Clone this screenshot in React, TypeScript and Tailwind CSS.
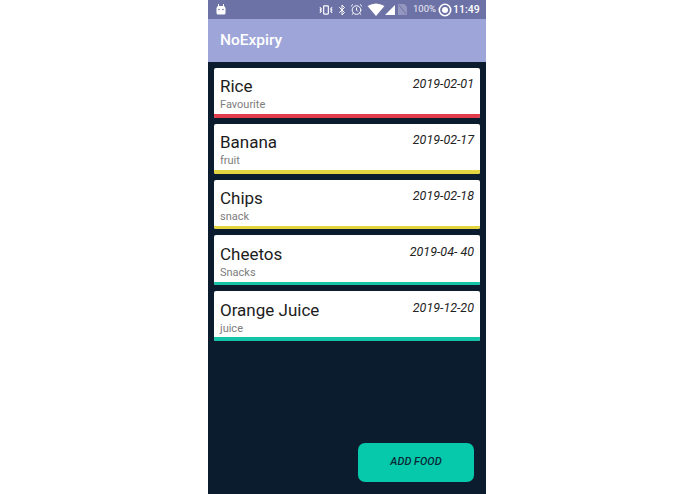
import { Bluetooth, AlarmClock, Vibrate } from 'lucide-react';

const foods = [
  { name: 'Rice', tag: 'Favourite', date: '2019-02-01', bar: 'bg-[#e23b4a]' },
  { name: 'Banana', tag: 'fruit', date: '2019-02-17', bar: 'bg-[#e3d53f]' },
  { name: 'Chips', tag: 'snack', date: '2019-02-18', bar: 'bg-[#e3d53f]' },
  { name: 'Cheetos', tag: 'Snacks', date: '2019-04- 40', bar: 'bg-[#14c4a8]' },
  { name: 'Orange Juice', tag: 'juice', date: '2019-12-20', bar: 'bg-[#14c4a8]' },
];

function StatusBar() {
  return (
    <div className="h-[19px] shrink-0 bg-[#6d72a6] flex items-center pl-[7px] pr-[6px] text-white">
      {/* android robot */}
      <svg width="12" height="12" viewBox="0 0 12 12" fill="#fff">
        <path d="M1.5 4.5 Q1.5 2 3.5 2 L8.5 2 Q10.5 2 10.5 4.5 L10.5 9 Q10.5 10.5 9 10.5 L3 10.5 Q1.5 10.5 1.5 9 Z" />
        <rect x="3" y="0" width="1" height="2.5" />
        <rect x="8" y="0" width="1" height="2.5" />
        <circle cx="4" cy="5.5" r="0.8" fill="#6d72a6" />
        <circle cx="8" cy="5.5" r="0.8" fill="#6d72a6" />
      </svg>
      <div className="ml-auto flex items-center">
        <Vibrate size={14} strokeWidth={2} className="mr-[3px]" />
        <Bluetooth size={12} strokeWidth={2} className="mr-[2px]" />
        <AlarmClock size={13} strokeWidth={1.8} className="mr-[4px]" />
        <svg width="18" height="13" viewBox="0 0 17 13" fill="#fff">
          <path d="M0 3 Q8.5 -2 17 3 L8.5 13 Z" />
        </svg>
        <svg width="10" height="10" viewBox="0 0 10 10" fill="#fff" className="mr-[3px]">
          <path d="M10 0 V10 H0 Z" />
        </svg>
        <svg width="9" height="11" viewBox="0 0 10 12" className="mr-[6px]">
          <path d="M0 0 H7 L10 3 V12 H0 Z" fill="#9397bf" />
          <path d="M1 1 L9 11" stroke="#6d72a6" strokeWidth="1" />
        </svg>
        <span className="w-[22px] text-[9.5px] text-[#e9eaf3] mr-[3px]">100%</span>
        <svg width="14" height="14" viewBox="0 0 14 14" className="mr-[1px]">
          <circle cx="7" cy="7" r="5.7" fill="none" stroke="#fff" strokeWidth="1.6" />
          <circle cx="7" cy="7" r="3" fill="#fff" />
        </svg>
        <span className="w-[27px] text-[10.5px] font-medium">11:49</span>
      </div>
    </div>
  );
}

function FoodCard({ name, tag, date, bar }: { name: string; tag: string; date: string; bar: string }) {
  return (
    <div className="h-[49.8px] bg-white rounded-[2px] overflow-hidden flex flex-col">
      <div className="flex-1 flex justify-between pl-[6px] pr-[6px] min-h-0">
        <div>
          <div className="text-[17px] leading-[20px] mt-[8.4px] text-[#1c1c1c]">{name}</div>
          <div className="text-[11px] leading-[14px] mt-[2px] text-[#7d7d7d]">{tag}</div>
        </div>
        <div className="text-[12.5px] leading-[16px] mt-[8.4px] italic text-[#222222]">{date}</div>
      </div>
      <div className={`h-[3.6px] shrink-0 ${bar}`} />
    </div>
  );
}

export default function App() {
  return (
    <div className="w-[695px] h-[494px] bg-white flex justify-center font-['Roboto',sans-serif]">
      <div className="w-[278px] ml-[-1px] h-full bg-[#0a1c2e] flex flex-col">
        <StatusBar />
        <div className="h-[43px] shrink-0 bg-[#9ea6d9] flex items-center pl-[12px]">
          <span className="text-white text-[15.5px] font-medium">NoExpiry</span>
        </div>
        <div className="flex flex-col gap-[6px] px-[6px] pt-[6px]">
          {foods.map((f) => (
            <FoodCard key={f.name} {...f} />
          ))}
        </div>
        <div className="mt-auto flex justify-end pr-[12px] pb-[12px]">
          <button className="w-[116px] h-[39px] rounded-[7px] bg-[#06c8aa] text-[#0a2a38] text-[11px] font-medium italic">
            ADD FOOD
          </button>
        </div>
      </div>
    </div>
  );
}
